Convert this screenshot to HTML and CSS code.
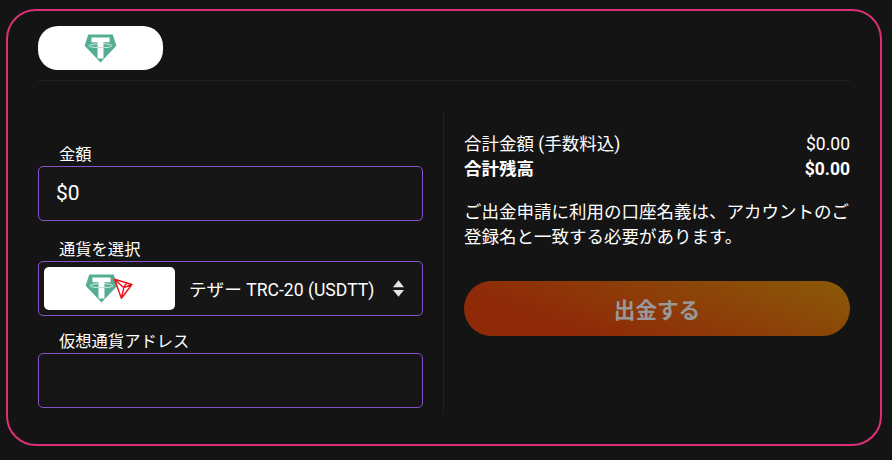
FILE: index.html
```html
<!DOCTYPE html>
<html lang="ja">
<head>
<meta charset="utf-8">
<title>出金</title>
<link rel="stylesheet" href="styles.css">
</head>
<body>
<main class="card">
  <header class="tabs">
    <div class="pill">
      <svg class="tether" viewBox="0 0 36 32"><use href="#tether"/></svg>
    </div>
  </header>
  <div class="content">
    <form class="left">
      <div class="field field-amount">
        <label class="label">金額</label>
        <div class="box box-amount">$0</div>
      </div>
      <div class="field field-currency">
        <label class="label">通貨を選択</label>
        <div class="box box-select">
          <div class="logo">
            <svg class="tether" viewBox="0 0 36 32"><use href="#tether"/></svg>
            <svg class="tron" viewBox="0 0 24 26">
              <path d="M1.5 1.5 L23 8 L10 25 Z M1.5 1.5 L13 12 L10 25 M13 12 L23 8 M13 12 L17 5" fill="none" stroke="#f0141e" stroke-width="1.8" stroke-linejoin="round"/>
            </svg>
          </div>
          <span class="select-text">テザー TRC-20 (USDTT)</span>
          <svg class="arrows" viewBox="0 0 12 18"><path d="M6 0 L12 7.5 H0 Z M0 10.5 H12 L6 18 Z" fill="#e6e6e6"/></svg>
        </div>
      </div>
      <div class="field field-address">
        <label class="label">仮想通貨アドレス</label>
        <div class="box"></div>
      </div>
    </form>
    <section class="right">
      <div class="row"><span>合計金額 (手数料込)</span><span>$0.00</span></div>
      <div class="row row-bold"><span>合計残高</span><span>$0.00</span></div>
      <p class="note">ご出金申請に利用の口座名義は、アカウントのご登録名と一致する必要があります。</p>
      <button class="submit" type="button">出金する</button>
    </section>
  </div>
</main>
<svg class="defs" width="0" height="0">
  <symbol id="tether" viewBox="0 0 36 32">
    <path d="M4.5 0.5 H31.5 L35.5 13 L18 31.5 L0.5 13 Z" fill="#53ae94"/>
    <path d="M8 3.8 H28 V9.2 H21.3 V27 H14.7 V9.2 H8 Z" fill="#fff"/>
    <path d="M14.7 10.8 C9 11.1 5.5 11.9 5.5 12.9 C5.5 13.9 9 14.8 14.7 15 M21.3 10.8 C27 11.1 30.5 11.9 30.5 12.9 C30.5 13.9 27 14.8 21.3 15" fill="none" stroke="#fff" stroke-width="1" stroke-opacity="0.85"/>
    <path d="M14.7 15 C16.5 15.2 19.5 15.2 21.3 15" fill="none" stroke="#9fd3c4" stroke-width="0.9"/>
  </symbol>
</svg>
</body>
</html>
```
FILE: styles.css
```css
* { box-sizing: border-box; }
html, body { margin: 0; height: 100%; background: #141414; overflow: hidden; }
body {
  padding: 9px 10px 0 6px;
  font-family: Roboto, "Noto Sans CJK JP", sans-serif;
  font-size: 16.3px;
  color: #fff;
}
.card {
  width: 876px;
  height: 437px;
  border: 2px solid #dc2f78;
  border-radius: 30px;
  padding: 15px 30px 0;
}
.tabs {
  height: 55px;
  border-bottom: 1px solid #222;
}
.pill {
  width: 125px;
  height: 44px;
  background: #fff;
  border-radius: 20px;
  display: flex;
  justify-content: center;
  align-items: center;
}
.tether { width: 33px; height: 29px; }
.content {
  display: flex;
  margin-top: 31px;
}
.left {
  width: 406px;
  height: 302px;
  padding: 31px 20px 0 0;
  border-right: 1px solid #222;
}
.field-currency { margin-top: 17px; }
.field-address { margin-top: 14px; }
.label {
  display: block;
  padding-left: 21px;
  height: 23px;
  line-height: 23px;
}
.box {
  height: 55px;
  border: 1px solid #8a52c8;
  border-radius: 5px;
  background: #161616;
}
.box-amount {
  display: flex;
  align-items: center;
  padding: 0 0 2px 17px;
  font-size: 21px;
}
.box-select {
  display: flex;
  align-items: center;
  padding: 0 18px 0 5px;
  font-size: 17.6px;
}
.logo {
  width: 131px;
  height: 43px;
  background: #fff;
  border-radius: 5px;
  display: flex;
  justify-content: center;
  align-items: center;
  padding-right: 2px;
}
.tron { width: 20px; height: 21px; margin-left: -5px; }
.select-text { margin-left: 14px; flex: 1; white-space: nowrap; }
.arrows { width: 11px; height: 17px; }
.right {
  flex: 1;
  padding: 20px 0 0 20px;
  font-size: 17.5px;
}
.row {
  display: flex;
  justify-content: space-between;
  height: 25px;
  line-height: 25px;
}
.row-bold { font-weight: 700; }
.note {
  margin: 18px 0 0;
  line-height: 25px;
}
.submit {
  display: block;
  width: 100%;
  height: 55px;
  margin-top: 31px;
  border: 0;
  border-radius: 28px;
  background: linear-gradient(20deg, #8f2a08 25%, #8a5a08 100%);
  color: #999;
  font: 700 21.6px Roboto, "Noto Sans CJK JP", sans-serif;
}
.defs { position: absolute; }
```
